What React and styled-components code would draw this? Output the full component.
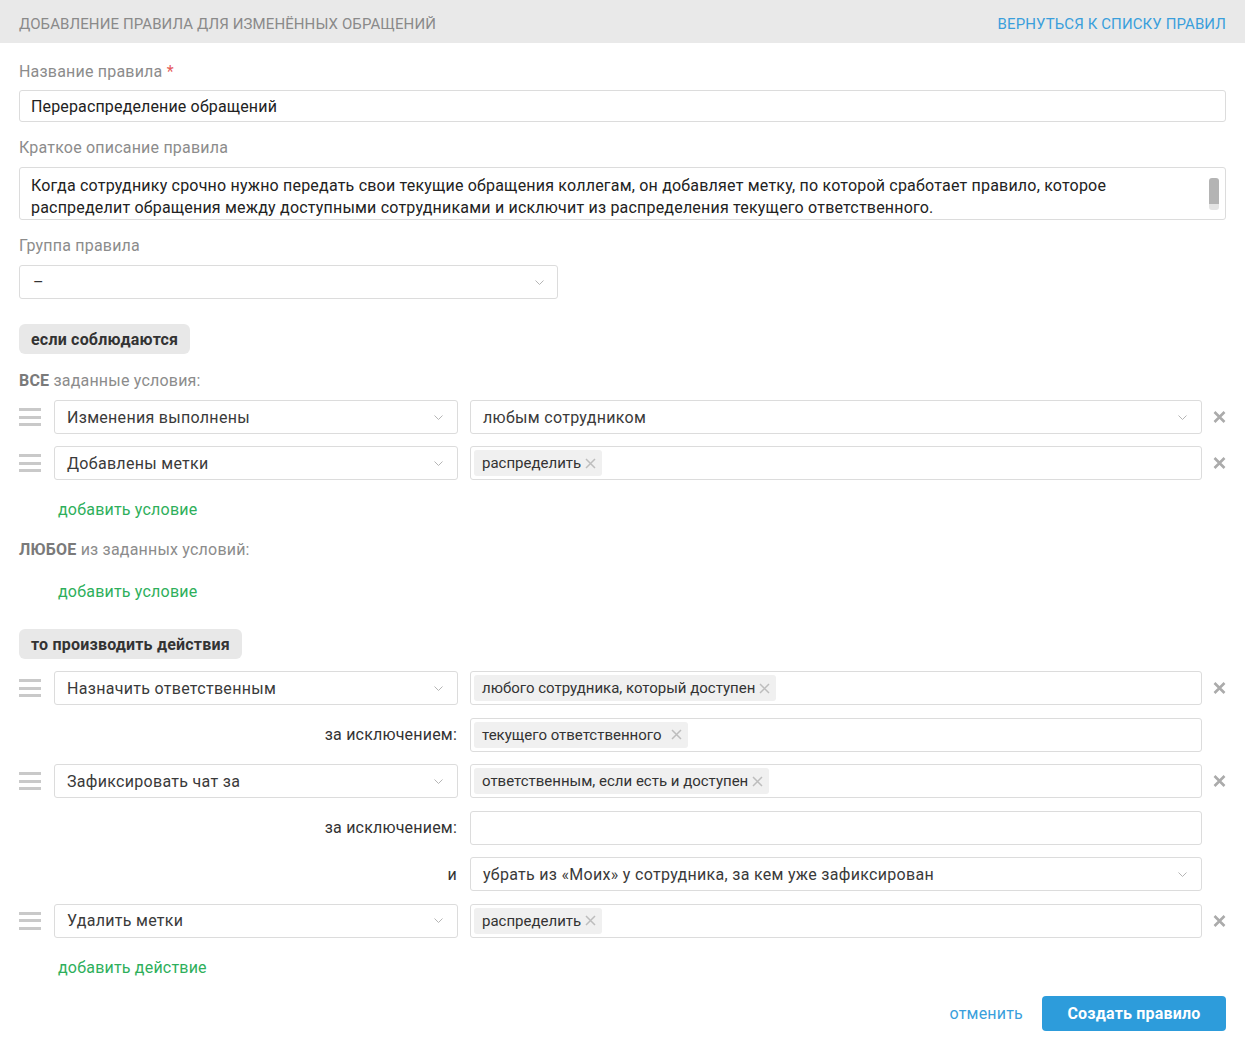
import React from "react";
import styled, { createGlobalStyle } from "styled-components";

const GlobalStyle = createGlobalStyle`
  body {
    margin: 0;
    background: #fff;
    font-family: Roboto, "Noto Sans", Arial, sans-serif;
    color: #333;
  }
  * { box-sizing: border-box; }
`;

function Chevron() {
  return (
    <svg width="9" height="5" viewBox="0 0 9 5">
      <path d="M0.5 0.5 L4.5 4.5 L8.5 0.5" fill="none" stroke="#b5b5b5" strokeWidth="1" />
    </svg>
  );
}

function CloseIcon() {
  return (
    <svg width="13" height="12" viewBox="0 0 13 12">
      <path d="M1.5 1 L11.5 11 M11.5 1 L1.5 11" stroke="#ababab" strokeWidth="2.6" />
    </svg>
  );
}

function TagX() {
  return (
    <svg width="11" height="11" viewBox="0 0 11 11">
      <path d="M1 1 L10 10 M10 1 L1 10" stroke="#bdbdbd" strokeWidth="1.5" />
    </svg>
  );
}

function Tag({ children, spaced }) {
  return (
    <TagBox $spaced={spaced}>
      {children}
      <TagX />
    </TagBox>
  );
}

function Handle() {
  return (
    <HandleBox>
      <span />
      <span />
      <span />
    </HandleBox>
  );
}

function Select({ value, wide }) {
  return (
    <SelectBox $wide={wide}>
      <span>{value}</span>
      <Chevron />
    </SelectBox>
  );
}

function RuleRow({ left, children, select }) {
  return (
    <Row>
      <Handle />
      <Select value={left} />
      {select ? <Select value={select} wide /> : <Field>{children}</Field>}
      <CloseCell>
        <CloseIcon />
      </CloseCell>
    </Row>
  );
}

function SubRow({ label, children, select }) {
  return (
    <Row>
      <SubLabel>{label}</SubLabel>
      {select ? <Select value={select} wide /> : <Field>{children}</Field>}
      <CloseCell />
    </Row>
  );
}

export default function App() {
  return (
    <>
      <GlobalStyle />
      <Header>
        <Title>Добавление правила для изменённых обращений</Title>
        <BackLink>Вернуться к списку правил</BackLink>
      </Header>
      <Content>
        <Label style={{ marginTop: 18, marginBottom: 8 }}>
          Название правила <Req>*</Req>
        </Label>
        <Input>Перераспределение обращений</Input>

        <Label style={{ marginTop: 15 }}>Краткое описание правила</Label>
        <TextArea>
          Когда сотруднику срочно нужно передать свои текущие обращения коллегам, он добавляет метку, по которой сработает правило, которое
          <br />
          распределит обращения между доступными сотрудниками и исключит из распределения текущего ответственного.
          <ScrollThumb />
        </TextArea>

        <Label style={{ marginTop: 15 }}>Группа правила</Label>
        <GroupSelect>
          <span>–</span>
          <Chevron />
        </GroupSelect>

        <Pill style={{ marginTop: 25 }}>если соблюдаются</Pill>

        <Hint style={{ marginTop: 16 }}>
          <b>ВСЕ</b> заданные условия:
        </Hint>
        <Rows style={{ marginTop: 9 }}>
          <RuleRow left="Изменения выполнены" select="любым сотрудником" />
          <RuleRow left="Добавлены метки">
            <Tag>распределить</Tag>
          </RuleRow>
        </Rows>
        <AddLink style={{ marginTop: 19 }}>добавить условие</AddLink>

        <Hint style={{ marginTop: 19 }}>
          <b>ЛЮБОЕ</b> из заданных условий:
        </Hint>
        <AddLink style={{ marginTop: 21 }}>добавить условие</AddLink>

        <Pill style={{ marginTop: 27 }}>то производить действия</Pill>

        <Rows $loose style={{ marginTop: 12 }}>
          <RuleRow left="Назначить ответственным">
            <Tag>любого сотрудника, который доступен</Tag>
          </RuleRow>
          <SubRow label="за исключением:">
            <Tag spaced>текущего ответственного</Tag>
          </SubRow>
          <RuleRow left="Зафиксировать чат за">
            <Tag>ответственным, если есть и доступен</Tag>
          </RuleRow>
          <SubRow label="за исключением:" />
          <SubRow label="и" select="убрать из «Моих» у сотрудника, за кем уже зафиксирован" />
          <RuleRow left="Удалить метки">
            <Tag>распределить</Tag>
          </RuleRow>
        </Rows>
        <AddLink style={{ marginTop: 19 }}>добавить действие</AddLink>

        <Footer>
          <CancelLink>отменить</CancelLink>
          <PrimaryButton>Создать правило</PrimaryButton>
        </Footer>
      </Content>
    </>
  );
}

const Header = styled.div`
  height: 43px;
  background: #e9e9e9;
  padding: 5px 19px 0;
  display: flex;
  align-items: center;
  justify-content: space-between;
  font-size: 15px;
  letter-spacing: 0.1px;
`;

const Title = styled.div`
  text-transform: uppercase;
  color: #8a8a8a;
`;

const BackLink = styled.a`
  text-transform: uppercase;
  color: #3a9fdc;
  cursor: pointer;
`;

const Content = styled.div`
  padding: 0 19px 17px;
  display: flex;
  flex-direction: column;
  align-items: flex-start;
`;

const Label = styled.div`
  padding-top: 1px;
  font-size: 16px;
  line-height: 20px;
  letter-spacing: 0.2px;
  color: #8c8c8c;
  margin-bottom: 9px;
`;

const Req = styled.span`
  color: #e55b5b;
`;

const Input = styled.div`
  width: 100%;
  height: 32px;
  border: 1px solid #dcdcdc;
  border-radius: 3px;
  padding: 1px 11px 0;
  display: flex;
  align-items: center;
  font-size: 16px;
  letter-spacing: 0.15px;
  color: #222;
`;

const TextArea = styled.div`
  position: relative;
  width: 100%;
  height: 53px;
  border: 1px solid #dcdcdc;
  border-radius: 3px;
  padding: 7px 11px 0;
  font-size: 16px;
  letter-spacing: 0.2px;
  line-height: 22px;
  color: #222;
  overflow: hidden;
  white-space: nowrap;
`;

const ScrollThumb = styled.span`
  position: absolute;
  right: 6px;
  top: 10px;
  width: 10px;
  height: 32px;
  border-radius: 3px;
  background: linear-gradient(#b4b4b4 0 80%, #e4e4e4 80% 100%);
`;

const GroupSelect = styled.div`
  width: 539px;
  height: 34px;
  border: 1px solid #dcdcdc;
  border-radius: 3px;
  padding: 0 13px 0 13px;
  display: flex;
  align-items: center;
  justify-content: space-between;
  font-size: 16px;
  color: #333;
`;

const Pill = styled.div`
  height: 30px;
  padding: 0 12px;
  display: flex;
  align-items: center;
  background: #e8e8e8;
  border-radius: 6px;
  font-size: 16px;
  letter-spacing: 0.2px;
  font-weight: 700;
  color: #333;
`;

const Hint = styled.div`
  padding-top: 1px;
  font-size: 16px;
  line-height: 20px;
  letter-spacing: 0.2px;
  color: #8c8c8c;

  b {
    font-weight: 700;
    color: #7a7a7a;
  }
`;

const Rows = styled.div`
  width: 100%;
  display: flex;
  flex-direction: column;
  gap: ${(p) => (p.$loose ? "12.6px" : "12px")};
`;

const Row = styled.div`
  display: flex;
  align-items: center;
  height: 34px;
`;

const HandleBox = styled.div`
  width: 22px;
  margin-right: 13px;
  display: flex;
  flex-direction: column;
  gap: 4.5px;

  span {
    display: block;
    height: 3px;
    background: #c9c9c9;
  }
`;

const SelectBox = styled.div`
  height: 34px;
  border: 1px solid #dcdcdc;
  border-radius: 3px;
  padding: 0 14px 0 12px;
  display: flex;
  align-items: center;
  justify-content: space-between;
  font-size: 16px;
  letter-spacing: 0.3px;
  color: #3a3a3a;
  ${(p) => (p.$wide ? "flex: 1;" : "width: 404px; margin-right: 12px;")}
`;

const Field = styled.div`
  flex: 1;
  height: 34px;
  border: 1px solid #dcdcdc;
  border-radius: 3px;
  padding: 0 3px;
  display: flex;
  align-items: center;
`;

const TagBox = styled.span`
  height: 26px;
  display: inline-flex;
  align-items: center;
  gap: ${(p) => (p.$spaced ? "9px" : "4px")};
  padding: 0 6px 0 8px;
  background: #f0f0f0;
  border-radius: 3px;
  font-size: 15px;
  color: #333;
`;

const CloseCell = styled.div`
  width: 24px;
  display: flex;
  justify-content: flex-end;
`;

const SubLabel = styled.div`
  width: 439px;
  margin-right: 12px;
  padding-right: 1px;
  text-align: right;
  font-size: 16px;
  letter-spacing: 0.2px;
  color: #333;
`;

const AddLink = styled.a`
  margin-left: 39px;
  padding-top: 1px;
  font-size: 16px;
  line-height: 20px;
  letter-spacing: 0.2px;
  color: #2eaf5b;
  cursor: pointer;
`;

const Footer = styled.div`
  align-self: stretch;
  margin-top: 18px;
  display: flex;
  justify-content: flex-end;
  align-items: center;
  gap: 19px;
`;

const CancelLink = styled.a`
  font-size: 16px;
  letter-spacing: 0.2px;
  color: #3a9fdc;
  cursor: pointer;
`;

const PrimaryButton = styled.button`
  height: 35px;
  width: 184px;
  border: none;
  border-radius: 4px;
  background: #2d9cdb;
  color: #fff;
  font-family: inherit;
  font-size: 16px;
  letter-spacing: 0.2px;
  font-weight: 700;
  cursor: pointer;
`;
